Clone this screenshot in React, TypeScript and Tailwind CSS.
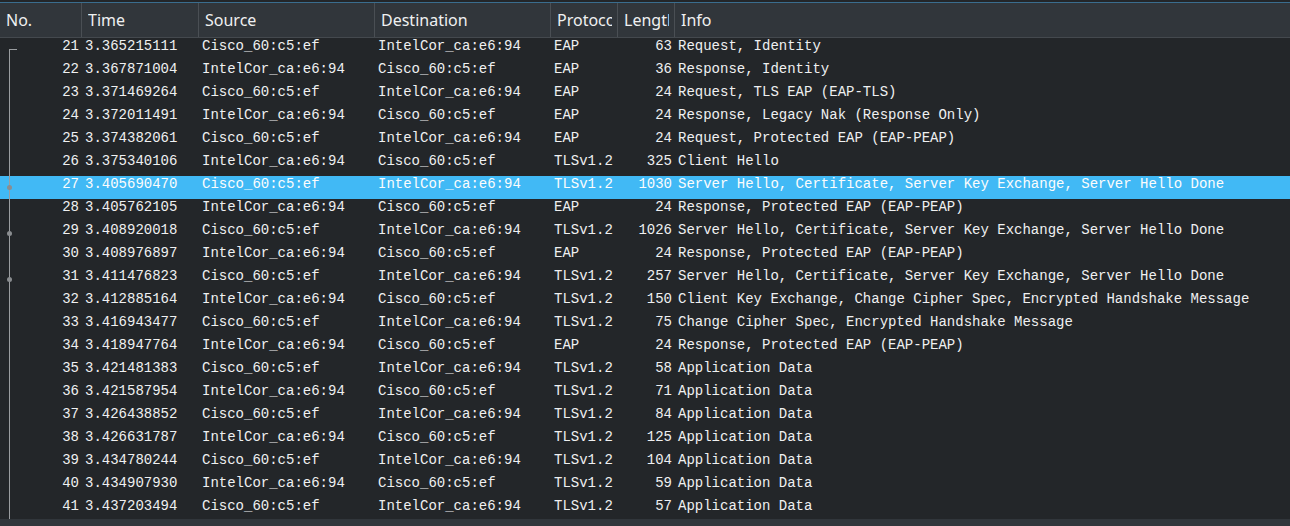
import React from "react";

type Row = [number, string, string, string, string, number, string];

const C = "Cisco_60:c5:ef";
const I = "IntelCor_ca:e6:94";
const SH = "Server Hello, Certificate, Server Key Exchange, Server Hello Done";
const PE = "Response, Protected EAP (EAP-PEAP)";

const rows: Row[] = [
  [21, "3.365215111", C, I, "EAP", 63, "Request, Identity"],
  [22, "3.367871004", I, C, "EAP", 36, "Response, Identity"],
  [23, "3.371469264", C, I, "EAP", 24, "Request, TLS EAP (EAP-TLS)"],
  [24, "3.372011491", I, C, "EAP", 24, "Response, Legacy Nak (Response Only)"],
  [25, "3.374382061", C, I, "EAP", 24, "Request, Protected EAP (EAP-PEAP)"],
  [26, "3.375340106", I, C, "TLSv1.2", 325, "Client Hello"],
  [27, "3.405690470", C, I, "TLSv1.2", 1030, SH],
  [28, "3.405762105", I, C, "EAP", 24, PE],
  [29, "3.408920018", C, I, "TLSv1.2", 1026, SH],
  [30, "3.408976897", I, C, "EAP", 24, PE],
  [31, "3.411476823", C, I, "TLSv1.2", 257, SH],
  [32, "3.412885164", I, C, "TLSv1.2", 150, "Client Key Exchange, Change Cipher Spec, Encrypted Handshake Message"],
  [33, "3.416943477", C, I, "TLSv1.2", 75, "Change Cipher Spec, Encrypted Handshake Message"],
  [34, "3.418947764", I, C, "EAP", 24, PE],
  [35, "3.421481383", C, I, "TLSv1.2", 58, "Application Data"],
  [36, "3.421587954", I, C, "TLSv1.2", 71, "Application Data"],
  [37, "3.426438852", C, I, "TLSv1.2", 84, "Application Data"],
  [38, "3.426631787", I, C, "TLSv1.2", 125, "Application Data"],
  [39, "3.434780244", C, I, "TLSv1.2", 104, "Application Data"],
  [40, "3.434907930", I, C, "TLSv1.2", 59, "Application Data"],
  [41, "3.437203494", C, I, "TLSv1.2", 57, "Application Data"],
];

function Tree({ kind }: { kind: "start" | "line" | "dot" }) {
  return (
    <svg width="18" height="23" viewBox="0 0 18 23" className="shrink-0">
      {kind === "start" ? (
        <>
          <rect x="9" y="11" width="8" height="1" fill="#9a9da0" />
          <rect x="9" y="11" width="1" height="12" fill="#9a9da0" />
        </>
      ) : (
        <rect x="9" y="0" width="1" height="23" fill="#9a9da0" />
      )}
      {kind === "dot" && <circle cx="9.5" cy="11.5" r="2.5" fill="#8a8d90" />}
    </svg>
  );
}

const headers: [string, string][] = [
  ["No.", "w-[82px]"],
  ["Time", "w-[117px]"],
  ["Source", "w-[176px]"],
  ["Destination", "w-[176px]"],
  ["Protocol", "w-[67px]"],
  ["Length", "w-[57px]"],
];

export default function App() {
  return (
    <div className="w-[1290px] h-[526px] bg-[#232629] flex flex-col overflow-hidden">
      <div className="h-[2px] shrink-0 bg-[#232629]" />
      <div className="h-[1px] shrink-0 bg-[#3a6d8e]" />
      <div
        className="h-[35px] shrink-0 flex bg-[#31363b] border-b border-[#44494e] text-[#eff0f1] text-[16px]"
        style={{ fontFamily: '"Noto Sans", sans-serif' }}
      >
        {headers.map(([h, w]) => (
          <div
            key={h}
            className={`${w} shrink-0 h-full border-r border-[#4a4f54] pl-[6px] pr-[5px] flex items-center`}
          >
            <span className="overflow-hidden whitespace-nowrap">{h}</span>
          </div>
        ))}
        <div className="flex-1 pl-[6px] flex items-center">Info</div>
      </div>
      <div
        className="flex-1 overflow-hidden text-[14px] leading-[16px] text-[#eff0f1]"
        style={{ fontFamily: '"Liberation Mono", monospace' }}
      >
        {rows.map((r, i) => {
          const sel = r[0] === 27;
          const kind = i === 0 ? "start" : r[0] === 27 || r[0] === 29 || r[0] === 31 ? "dot" : "line";
          return (
            <div
              key={r[0]}
              className={`h-[23px] flex whitespace-nowrap ${sel ? "bg-[#41b9f5] text-[#fcfcfc]" : ""}`}
            >
              <div className="w-[82px] shrink-0 flex">
                <Tree kind={kind} />
                <div className="flex-1 text-right pr-[3px]">{r[0]}</div>
              </div>
              <div className="w-[117px] shrink-0 pl-[3px]">{r[1]}</div>
              <div className="w-[176px] shrink-0 pl-[3px]">{r[2]}</div>
              <div className="w-[176px] shrink-0 pl-[3px]">{r[3]}</div>
              <div className="w-[67px] shrink-0 pl-[3px]">{r[4]}</div>
              <div className="w-[57px] shrink-0 text-right pr-[3px]">{r[5]}</div>
              <div className="flex-1 pl-[3px]">{r[6]}</div>
            </div>
          );
        })}
      </div>
      <div className="h-[7px] shrink-0 bg-[#31363b]" />
    </div>
  );
}
